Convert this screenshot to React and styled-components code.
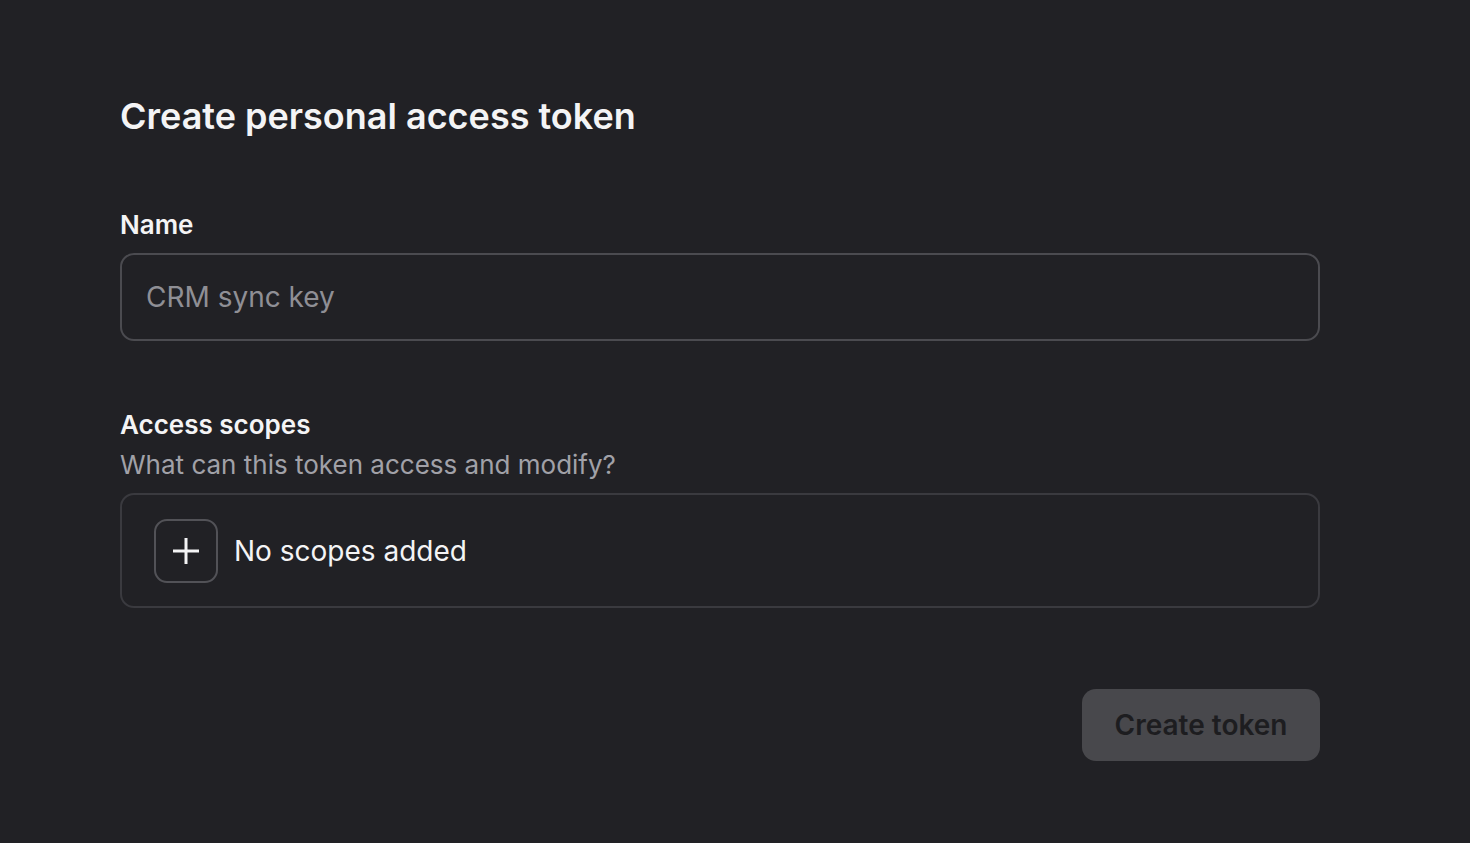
import React from 'react';
import styled, { createGlobalStyle } from 'styled-components';

const GlobalStyle = createGlobalStyle`
  html, body {
    margin: 0;
    padding: 0;
    background: #212125;
  }
  body {
    font-family: Inter, "Noto Sans", sans-serif;
    -webkit-font-smoothing: antialiased;
  }
`;

const Page = styled.div`
  min-height: 843px;
  background: #212125;
  padding: 94px 150px 0 120px;
  box-sizing: border-box;
`;

const Form = styled.div`
  width: 1200px;
  display: flex;
  flex-direction: column;
`;

const Title = styled.h1`
  margin: 0 0 71px;
  font-size: 36px;
  font-weight: 600;
  line-height: 44px;
  color: #f4f4f5;
`;

const Field = styled.div`
  display: flex;
  flex-direction: column;
  margin-bottom: ${p => p.$gap || 0}px;
`;

const Label = styled.label`
  font-size: 26px;
  font-weight: 600;
  line-height: 32px;
  color: #f4f4f5;
`;

const Hint = styled.div`
  font-size: 26px;
  line-height: 32px;
  color: #a1a1a8;
  margin-top: 8px;
`;

const Input = styled.input`
  margin-top: 12px;
  height: 88px;
  box-sizing: border-box;
  border: 2px solid #4b4b50;
  border-radius: 14px;
  background: transparent;
  padding: 0 24px;
  font-family: inherit;
  font-size: 28px;
  color: #f4f4f5;
  outline: none;

  &::placeholder {
    color: #8f8f95;
  }
`;

const ScopeBox = styled.div`
  margin-top: 12px;
  height: 115px;
  box-sizing: border-box;
  border: 2px solid #3a3a3f;
  border-radius: 14px;
  display: flex;
  align-items: center;
  padding: 0 32px;
  gap: 16px;
`;

const AddButton = styled.button`
  width: 64px;
  height: 64px;
  box-sizing: border-box;
  border: 2px solid #525257;
  border-radius: 13px;
  background: transparent;
  color: #f4f4f5;
  display: flex;
  align-items: center;
  justify-content: center;
  padding: 0;
`;

const EmptyText = styled.span`
  font-size: 28px;
  color: #f4f4f5;
`;

const Footer = styled.div`
  display: flex;
  justify-content: flex-end;
  margin-top: 81px;
`;

const SubmitButton = styled.button`
  width: 238px;
  height: 72px;
  border: none;
  border-radius: 14px;
  background: #48484c;
  color: #1d1d20;
  font-family: inherit;
  font-size: 28px;
  font-weight: 600;
`;

const PlusIcon = () => (
  <svg width="26" height="26" viewBox="0 0 26 26" fill="none">
    <path d="M13 0v26M0 13h26" stroke="currentColor" strokeWidth="3" />
  </svg>
);

export default function App() {
  return (
    <>
      <GlobalStyle />
      <Page>
        <Form>
          <Title>Create personal access token</Title>
          <Field $gap={68}>
            <Label>Name</Label>
            <Input placeholder="CRM sync key" />
          </Field>
          <Field>
            <Label>Access scopes</Label>
            <Hint>What can this token access and modify?</Hint>
            <ScopeBox>
              <AddButton>
                <PlusIcon />
              </AddButton>
              <EmptyText>No scopes added</EmptyText>
            </ScopeBox>
          </Field>
          <Footer>
            <SubmitButton disabled>Create token</SubmitButton>
          </Footer>
        </Form>
      </Page>
    </>
  );
}
